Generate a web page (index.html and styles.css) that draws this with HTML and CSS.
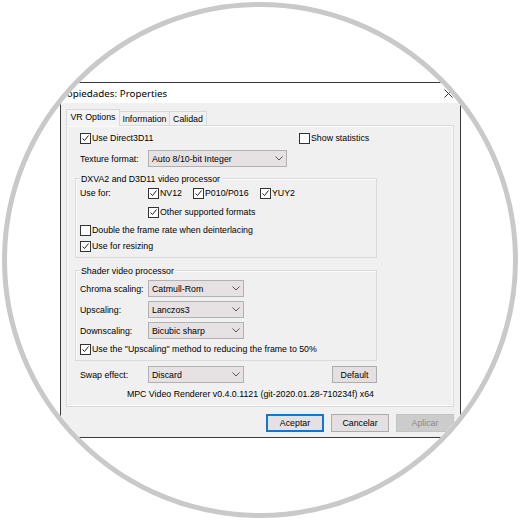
FILE: index.html
```html
<!DOCTYPE html>
<html>
<head>
<meta charset="utf-8">
<link rel="stylesheet" href="styles.css">
</head>
<body>
<div class="circle">
  <div class="dialog">
    <div class="titlebar">
      <div class="title"><span class="title-text">Propiedades: Properties</span></div>
      <svg class="close" width="9" height="9" viewBox="0 0 9 9"><path d="M0.5 0.5 L8.5 8.5 M8.5 0.5 L0.5 8.5" stroke="#333" stroke-width="1" fill="none"/></svg>
    </div>
    <div class="body">
      <div class="tabs">
        <div class="tab active">VR Options</div>
        <div class="tab">Information</div>
        <div class="tab">Calidad</div>
      </div>
      <div class="panel">
        <div class="row r1">
          <div class="cb"><span class="box"><svg width="9" height="9" viewBox="0 0 9 9"><path d="M1.5 4.5 L3.5 6.5 L7.5 1.5" stroke="#222" fill="none"/></svg></span>Use Direct3D11</div>
          <div class="cb"><span class="box"></span>Show statistics</div>
        </div>
        <div class="row r2">
          <span class="lbl">Texture format:</span>
          <div class="select wide"><span>Auto 8/10-bit Integer</span><svg width="8" height="5" viewBox="0 0 8 5"><path d="M0.5 0.5 L4 4 L7.5 0.5" stroke="#555" fill="none"/></svg></div>
        </div>
        <div class="group g1">
          <div class="legend">DXVA2 and D3D11 video processor</div>
          <div class="row usefor">
            <span class="lbl">Use for:</span>
            <div class="cb"><span class="box"><svg width="9" height="9" viewBox="0 0 9 9"><path d="M1.5 4.5 L3.5 6.5 L7.5 1.5" stroke="#222" fill="none"/></svg></span>NV12</div>
            <div class="cb"><span class="box"><svg width="9" height="9" viewBox="0 0 9 9"><path d="M1.5 4.5 L3.5 6.5 L7.5 1.5" stroke="#222" fill="none"/></svg></span>P010/P016</div>
            <div class="cb"><span class="box"><svg width="9" height="9" viewBox="0 0 9 9"><path d="M1.5 4.5 L3.5 6.5 L7.5 1.5" stroke="#222" fill="none"/></svg></span>YUY2</div>
          </div>
          <div class="row other">
            <div class="cb"><span class="box"><svg width="9" height="9" viewBox="0 0 9 9"><path d="M1.5 4.5 L3.5 6.5 L7.5 1.5" stroke="#222" fill="none"/></svg></span>Other supported formats</div>
          </div>
          <div class="row double">
            <div class="cb"><span class="box"></span>Double the frame rate when deinterlacing</div>
          </div>
          <div class="row resize">
            <div class="cb"><span class="box"><svg width="9" height="9" viewBox="0 0 9 9"><path d="M1.5 4.5 L3.5 6.5 L7.5 1.5" stroke="#222" fill="none"/></svg></span>Use for resizing</div>
          </div>
        </div>
        <div class="group g2">
          <div class="legend">Shader video processor</div>
          <div class="row srow first">
            <span class="lbl">Chroma scaling:</span>
            <div class="select"><span>Catmull-Rom</span><svg width="8" height="5" viewBox="0 0 8 5"><path d="M0.5 0.5 L4 4 L7.5 0.5" stroke="#555" fill="none"/></svg></div>
          </div>
          <div class="row srow">
            <span class="lbl">Upscaling:</span>
            <div class="select"><span>Lanczos3</span><svg width="8" height="5" viewBox="0 0 8 5"><path d="M0.5 0.5 L4 4 L7.5 0.5" stroke="#555" fill="none"/></svg></div>
          </div>
          <div class="row srow">
            <span class="lbl">Downscaling:</span>
            <div class="select"><span>Bicubic sharp</span><svg width="8" height="5" viewBox="0 0 8 5"><path d="M0.5 0.5 L4 4 L7.5 0.5" stroke="#555" fill="none"/></svg></div>
          </div>
          <div class="row half">
            <div class="cb"><span class="box"><svg width="9" height="9" viewBox="0 0 9 9"><path d="M1.5 4.5 L3.5 6.5 L7.5 1.5" stroke="#222" fill="none"/></svg></span>Use the "Upscaling" method to reducing the frame to 50%</div>
          </div>
        </div>
        <div class="row swap">
          <span class="lbl">Swap effect:</span>
          <div class="select"><span>Discard</span><svg width="8" height="5" viewBox="0 0 8 5"><path d="M0.5 0.5 L4 4 L7.5 0.5" stroke="#555" fill="none"/></svg></div>
          <div class="btn default">Default</div>
        </div>
        <div class="row version">MPC Video Renderer v0.4.0.1121 (git-2020.01.28-710234f) x64</div>
      </div>
      <div class="buttons">
        <div class="btn primary">Aceptar</div>
        <div class="btn">Cancelar</div>
        <div class="btn disabled">Aplicar</div>
      </div>
    </div>
  </div>
</div>
</body>
</html>
```
FILE: styles.css
```css
html, body {
  margin: 0;
  padding: 0;
  background: #ffffff;
}
.circle {
  margin: 2px;
  width: 516px;
  height: 516px;
  box-sizing: border-box;
  border: 5px solid #c9c9c9;
  border-radius: 50%;
  overflow: hidden;
  background: #ffffff;
}
.dialog {
  margin-left: 53px;
  margin-top: 75px;
  width: 401px;
  height: 356px;
  box-sizing: border-box;
  border: 1px solid #3a3a3a;
  display: flex;
  flex-direction: column;
  font-family: "Liberation Sans", Arial, sans-serif;
  font-size: 8.8px;
  color: #000000;
}
.titlebar {
  height: 20px;
  background: #ffffff;
  display: flex;
  align-items: center;
  justify-content: space-between;
  padding-right: 7px;
}
.title {
  margin-left: 4px;
  overflow: hidden;
  height: 20px;
  display: flex;
  align-items: center;
}
.title-text {
  margin-left: -8px;
  font-family: "Noto Sans", sans-serif;
  font-size: 9.8px;
  color: #000;
  white-space: nowrap;
}
.close {
  display: block;
  margin-top: 1px;
}
.body {
  flex: 1;
  background: #f0f0f0;
  padding: 6px 6px 0 5px;
  display: flex;
  flex-direction: column;
}
.tabs {
  height: 16px;
  display: flex;
  align-items: flex-end;
}
.tab {
  height: 14px;
  box-sizing: border-box;
  border: 1px solid #d9d9d9;
  border-bottom: none;
  border-left: none;
  display: flex;
  align-items: center;
  justify-content: center;
  padding-top: 1px;
  background: #f0f0f0;
}
.tab.active {
  height: 17px;
  margin-bottom: -1px;
  width: 54px;
  border-left: 1px solid #d9d9d9;
  background: #f4f4f4;
  position: relative;
  z-index: 1;
  padding-top: 0;
  padding-bottom: 2px;
}
.tab:nth-child(2) { width: 50px; }
.tab:nth-child(3) { width: 37px; }
.panel {
  height: 282px;
  width: 388px;
  box-sizing: border-box;
  border: 1px solid #d9d9d9;
  box-shadow: inset 0 0 0 1px #fbfbfb;
  background: #f0f0f0;
  padding: 3px 0 0 8px;
}
.row {
  display: flex;
  align-items: center;
  white-space: nowrap;
}
.r1 { height: 18px; padding-left: 5px; }
.r1 .cb:first-child { width: 219px; }
.r2 { height: 17px; margin-top: 3px; padding-left: 5px; }
.lbl { width: 68px; flex: none; }
.cb {
  display: flex;
  align-items: center;
}
.box {
  width: 11px;
  height: 11px;
  box-sizing: border-box;
  border: 1px solid #333;
  background: #ffffff;
  margin-right: 1px;
  flex: none;
  display: flex;
  align-items: center;
  justify-content: center;
}
.box svg { display: block; }
.select {
  width: 96px;
  height: 17px;
  box-sizing: border-box;
  border: 1px solid #b3b0b2;
  background: #e6e2e4;
  display: flex;
  align-items: center;
  justify-content: space-between;
  padding: 0 3px 0 3px;
}
.select.wide { width: 139px; }
.select svg { display: block; }
.group {
  width: 302px;
  box-sizing: border-box;
  border: 1px solid #dadada;
  box-shadow: inset 1px 1px 0 #fbfbfb;
  padding: 0 0 4px 4px;
}
.g1 { margin-top: 11px; }
.g2 { margin-top: 12px; }
.legend {
  display: block;
  width: fit-content;
  margin-top: -7px;
  height: 14px;
  line-height: 14px;
  background: #f0f0f0;
  padding: 0 2px 0 1px;
  white-space: nowrap;
}
.usefor { height: 14px; }
.usefor .cb:nth-child(2) { width: 45px; }
.usefor .cb:nth-child(3) { width: 67px; }
.other { height: 14px; margin-top: 5px; padding-left: 68px; }
.double { height: 14px; margin-top: 4px; }
.resize { height: 14px; margin-top: 2px; }
.srow { height: 17px; margin-top: 4px; }
.srow.first { margin-top: 2px; }
.half { height: 14px; margin-top: 3px; }
.swap {
  width: 302px;
  height: 17px;
  margin-top: 5px;
  padding-left: 5px;
  box-sizing: border-box;
}
.btn {
  height: 18px;
  width: 58px;
  box-sizing: border-box;
  border: 1px solid #adadad;
  background: #e4e0e2;
  display: flex;
  align-items: center;
  justify-content: center;
}
.btn.default {
  margin-left: auto;
  width: 45px;
  height: 17px;
}
.version {
  width: 302px;
  height: 12px;
  margin-top: 5px;
  justify-content: flex-end;
  padding-right: 3px;
  box-sizing: border-box;
}
.buttons {
  margin-top: 7px;
  display: flex;
  justify-content: flex-end;
  gap: 7px;
  padding-right: 0;
}
.btn.primary {
  border: 2px solid #0a78d4;
  background: #e5e1e3;
}
.btn.disabled {
  background: #cccccc;
  border-color: #c4c4c4;
  color: #8a8a8a;
}
```
